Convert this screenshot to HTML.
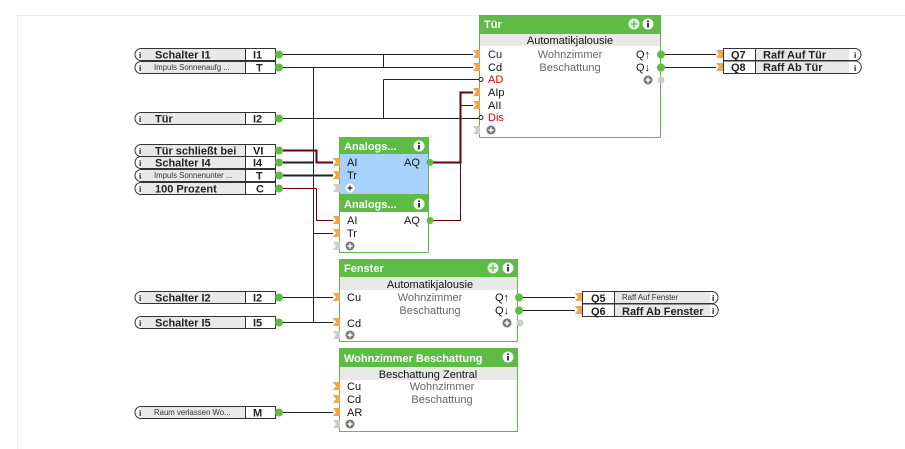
<!DOCTYPE html>
<html><head><meta charset="utf-8"><style>
html,body{margin:0;padding:0;background:#fff;width:905px;height:449px;overflow:hidden}
svg{display:block}
text{font-family:"Liberation Sans",sans-serif}
.b{font-weight:bold;font-size:11px;fill:#222}
.s{font-size:7.8px;fill:#333}
.p{font-size:11px;fill:#111}
.g{font-size:11px;fill:#666}
.r{font-size:11px;fill:#e00}
.t{font-weight:bold;font-size:11px;fill:#fff}
</style></head><body>
<svg width="905" height="449" viewBox="0 0 905 449">
<defs>
<g id="inp"><rect x="0" y="0" width="7" height="8" fill="#f2a54a"/><path d="M0 0 L3 4 L0 8 Z" fill="#fff"/></g>
<g id="ginp"><rect x="0" y="0" width="7" height="8" fill="#ccc"/><path d="M0 0 L3 4 L0 8 Z" fill="#fff"/></g>
<g id="plus"><circle r="4.5" fill="#777"/><path d="M-2.5 0H2.5M0 -2.5V2.5" stroke="#fff" stroke-width="1.5"/></g>
<g id="info"><circle r="5.5" fill="#fff"/><rect x="-0.9" y="-3.5" width="1.8" height="1.6" fill="#222"/><rect x="-0.9" y="-1" width="1.8" height="4.5" fill="#222"/></g>
<g id="move"><circle r="5.5" fill="#fff" opacity=".85"/><path d="M-3.5 0H3.5M0 -3.5V3.5" stroke="#5dbb46" stroke-width="1.3"/></g>
</defs>
<path d="M17.5 15.5H905M17.5 15.5V449" stroke="#ddd" stroke-dasharray="1 1" fill="none"/>

<g stroke="#222" stroke-width="1" fill="none">
<path d="M283 54.5H479"/>
<path d="M283 67.5H479"/>
<path d="M383.5 54.5V67.5"/>
<path d="M313.5 67.5V322.5"/>
<path d="M283 118.5H479"/>
<path d="M383.5 79.5V118.5H383M383.5 79.5H479"/>
<path d="M283 162.5H313" stroke-width="2"/>
<path d="M283 175.5H339" stroke-width="2"/>
<path d="M313.5 233.5H339"/>
<path d="M283 297.5H339"/>
<path d="M283 322.5H339"/>
<path d="M283 412.5H339"/>
<path d="M664 54.5H723M664 67.5H723"/>
<path d="M522 297.5H582M522 310.5H582"/>
<path d="M460 105.5H479"/>
</g>
<g stroke="#6b0000" fill="none">
<path d="M283 150.5H316.5V162.5H339" stroke-width="2"/>
<path d="M283 188.5H316.5" stroke-width="1"/>
<path d="M316.5 188.5V220.5H339" stroke-width="1"/>
<path d="M433 162.5H460.5V92.5H479" stroke-width="2"/>
<path d="M433 220.5H460.5V162" stroke-width="1"/>
</g>

<g>
<g transform="translate(0,48)">
<path d="M141 0.5H275.5V12.5H141A6 6 0 0 1 141 0.5Z" fill="#fff" stroke="#333"/>
<rect x="141" y="1" width="104" height="11" fill="#e8e8e8"/><line x1="245.5" y1="0.5" x2="245.5" y2="12.5" stroke="#333"/>
<text x="139" y="10" font-size="8" font-weight="bold">i</text>
<text class="b" x="155" y="10.5">Schalter I1</text><text class="b" x="253" y="10.5">I1</text>
</g>
<g transform="translate(0,61)">
<path d="M141 0.5H275.5V12.5H141A6 6 0 0 1 141 0.5Z" fill="#fff" stroke="#333"/>
<rect x="141" y="1" width="104" height="11" fill="#e8e8e8"/><line x1="245.5" y1="0.5" x2="245.5" y2="12.5" stroke="#333"/>
<text x="139" y="10" font-size="8" font-weight="bold">i</text>
<text class="s" x="154" y="9">Impuls  Sonnenaufg ...</text><text class="b" x="256" y="10.5">T</text>
</g>
<g transform="translate(0,112)">
<path d="M141 0.5H275.5V12.5H141A6 6 0 0 1 141 0.5Z" fill="#fff" stroke="#333"/>
<rect x="141" y="1" width="104" height="11" fill="#e8e8e8"/><line x1="245.5" y1="0.5" x2="245.5" y2="12.5" stroke="#333"/>
<text x="139" y="10" font-size="8" font-weight="bold">i</text>
<text class="b" x="155" y="10.5">Tür</text><text class="b" x="253" y="10.5">I2</text>
</g>
<g transform="translate(0,144)">
<path d="M141 0.5H275.5V12.5H141A6 6 0 0 1 141 0.5Z" fill="#fff" stroke="#333"/>
<rect x="141" y="1" width="104" height="11" fill="#e8e8e8"/><line x1="245.5" y1="0.5" x2="245.5" y2="12.5" stroke="#333"/>
<text x="139" y="10" font-size="8" font-weight="bold">i</text>
<text class="b" x="155" y="10.5">Tür schließt bei</text><text class="b" x="253" y="10.5">VI</text>
</g>
<g transform="translate(0,156)">
<path d="M141 0.5H275.5V12.5H141A6 6 0 0 1 141 0.5Z" fill="#fff" stroke="#333"/>
<rect x="141" y="1" width="104" height="11" fill="#e8e8e8"/><line x1="245.5" y1="0.5" x2="245.5" y2="12.5" stroke="#333"/>
<text x="139" y="10" font-size="8" font-weight="bold">i</text>
<text class="b" x="155" y="10.5">Schalter I4</text><text class="b" x="253" y="10.5">I4</text>
</g>
<g transform="translate(0,169)">
<path d="M141 0.5H275.5V12.5H141A6 6 0 0 1 141 0.5Z" fill="#fff" stroke="#333"/>
<rect x="141" y="1" width="104" height="11" fill="#e8e8e8"/><line x1="245.5" y1="0.5" x2="245.5" y2="12.5" stroke="#333"/>
<text x="139" y="10" font-size="8" font-weight="bold">i</text>
<text class="s" x="154" y="9">Impuls  Sonnenunter ...</text><text class="b" x="256" y="10.5">T</text>
</g>
<g transform="translate(0,182)">
<path d="M141 0.5H275.5V12.5H141A6 6 0 0 1 141 0.5Z" fill="#fff" stroke="#333"/>
<rect x="141" y="1" width="104" height="11" fill="#e8e8e8"/><line x1="245.5" y1="0.5" x2="245.5" y2="12.5" stroke="#333"/>
<text x="139" y="10" font-size="8" font-weight="bold">i</text>
<text class="b" x="155" y="10.5">100 Prozent</text><text class="b" x="256" y="10.5">C</text>
</g>
<g transform="translate(0,291)">
<path d="M141 0.5H275.5V12.5H141A6 6 0 0 1 141 0.5Z" fill="#fff" stroke="#333"/>
<rect x="141" y="1" width="104" height="11" fill="#e8e8e8"/><line x1="245.5" y1="0.5" x2="245.5" y2="12.5" stroke="#333"/>
<text x="139" y="10" font-size="8" font-weight="bold">i</text>
<text class="b" x="155" y="10.5">Schalter I2</text><text class="b" x="253" y="10.5">I2</text>
</g>
<g transform="translate(0,316)">
<path d="M141 0.5H275.5V12.5H141A6 6 0 0 1 141 0.5Z" fill="#fff" stroke="#333"/>
<rect x="141" y="1" width="104" height="11" fill="#e8e8e8"/><line x1="245.5" y1="0.5" x2="245.5" y2="12.5" stroke="#333"/>
<text x="139" y="10" font-size="8" font-weight="bold">i</text>
<text class="b" x="155" y="10.5">Schalter I5</text><text class="b" x="253" y="10.5">I5</text>
</g>
<g transform="translate(0,406)">
<path d="M141 0.5H275.5V12.5H141A6 6 0 0 1 141 0.5Z" fill="#fff" stroke="#333"/>
<rect x="141" y="1" width="104" height="11" fill="#e8e8e8"/><line x1="245.5" y1="0.5" x2="245.5" y2="12.5" stroke="#333"/>
<text x="139" y="10" font-size="8" font-weight="bold">i</text>
<text class="s" x="154" y="9">Raum  verlassen  Wo...</text><text class="b" x="253" y="10.5">M</text>
</g>
<g fill="#5dbb46">
<circle cx="279" cy="54.5" r="4"/><circle cx="279" cy="67.5" r="4"/><circle cx="279" cy="118.5" r="4"/>
<circle cx="279" cy="150.5" r="4"/><circle cx="279" cy="162.5" r="4"/><circle cx="279" cy="175.5" r="4"/><circle cx="279" cy="188.5" r="4"/>
<circle cx="279" cy="297.5" r="4"/><circle cx="279" cy="322.5" r="4"/><circle cx="279" cy="412.5" r="4"/>
</g>
</g>

<rect x="479.5" y="15.5" width="181" height="122" fill="#fff" stroke="#5dbb46"/>
<rect x="479" y="15" width="182" height="19" fill="#5dbb46"/>
<rect x="480" y="34" width="180" height="12" fill="#e8e8e8"/>
<text class="t" x="484" y="28">Tür</text>
<use href="#move" x="634" y="24"/><use href="#info" x="648" y="24"/>
<text class="p" x="570" y="44" text-anchor="middle">Automatikjalousie</text>
<text class="g" x="570" y="58" text-anchor="middle">Wohnzimmer</text>
<text class="g" x="570" y="71" text-anchor="middle">Beschattung</text>
<text class="p" x="488" y="58">Cu</text><text class="p" x="488" y="71">Cd</text>
<text class="r" x="488" y="83">AD</text><text class="p" x="488" y="96">AIp</text>
<text class="p" x="488" y="109">AII</text><text class="r" x="488" y="121">Dis</text>
<text class="p" x="636" y="58">Q↑</text><text class="p" x="636" y="71">Q↓</text>
<use href="#inp" x="473" y="50"/><use href="#inp" x="473" y="63"/>
<use href="#inp" x="473" y="88"/><use href="#inp" x="473" y="101"/>
<circle cx="481" cy="79.5" r="2" fill="#fff" stroke="#222"/><circle cx="481" cy="117.5" r="2" fill="#fff" stroke="#222"/>
<use href="#ginp" x="473" y="126"/><use href="#plus" x="491" y="130"/>
<use href="#plus" x="648" y="80"/><circle cx="661" cy="80" r="3.5" fill="#ccc"/>
<circle cx="661" cy="54.5" r="4" fill="#5dbb46"/><circle cx="661" cy="67.5" r="4" fill="#5dbb46"/>

<g>
<path d="M723.5 48.5H855A6 6 0 0 1 855 60.5H723.5Z" fill="#fff" stroke="#333"/>
<path d="M723.5 61H855A6 6 0 0 1 855 73.5H723.5Z" fill="#fff" stroke="#333"/>
<rect x="756" y="49" width="93" height="11" fill="#e8e8e8"/><rect x="756" y="61.5" width="93" height="11.5" fill="#e8e8e8"/>
<line x1="755.5" y1="48" x2="755.5" y2="74" stroke="#333"/>
<text class="b" x="731" y="58.5">Q7</text><text class="b" x="731" y="71">Q8</text>
<text class="b" x="763" y="58.5">Raff Auf Tür</text><text class="b" x="763" y="71">Raff Ab Tür</text>
<text x="854" y="58" font-size="8" font-weight="bold">i</text><text x="854" y="71" font-size="8" font-weight="bold">i</text>
<use href="#inp" x="716" y="50"/><use href="#inp" x="716" y="63"/>
</g>
<g>
<path d="M582.5 291.5H712A6 6 0 0 1 712 303.5H582.5Z" fill="#fff" stroke="#333"/>
<path d="M582.5 304H712A6 6 0 0 1 712 316.5H582.5Z" fill="#fff" stroke="#333"/>
<rect x="615" y="292" width="95" height="11" fill="#e8e8e8"/><rect x="615" y="304.5" width="95" height="11.5" fill="#e8e8e8"/>
<line x1="614.5" y1="291" x2="614.5" y2="317" stroke="#333"/>
<text class="b" x="591" y="302">Q5</text><text class="b" x="591" y="315">Q6</text>
<text class="s" x="622" y="300">Raff Auf Fenster</text><text class="b" x="622" y="315">Raff Ab Fenster</text>
<text x="712" y="301" font-size="8" font-weight="bold">i</text><text x="712" y="314" font-size="8" font-weight="bold">i</text>
<use href="#inp" x="575" y="293"/><use href="#inp" x="575" y="306"/>
</g>

<rect x="339.5" y="137.5" width="89" height="57" fill="#a8d2fb" stroke="#5dbb46"/>
<rect x="339" y="137" width="90" height="17" fill="#5dbb46"/>
<text class="t" x="344" y="150">Analogs...</text><use href="#info" x="419" y="146"/>
<text class="p" x="347" y="166">AI</text><text class="p" x="347" y="179">Tr</text><text class="p" x="404" y="166">AQ</text>
<use href="#inp" x="333" y="158"/><use href="#inp" x="333" y="171"/><use href="#ginp" x="333" y="184"/>
<circle cx="350" cy="188" r="4.5" fill="#fff"/><path d="M347.5 188H352.5M350 185.5V190.5" stroke="#222" stroke-width="1.2"/>
<circle cx="430" cy="162.5" r="3.5" fill="#5dbb46"/>
<rect x="339.5" y="195.5" width="89" height="57" fill="#fff" stroke="#5dbb46"/>
<rect x="339" y="195" width="90" height="17" fill="#5dbb46"/>
<text class="t" x="344" y="208">Analogs...</text><use href="#info" x="419" y="204"/>
<text class="p" x="347" y="224">AI</text><text class="p" x="347" y="237">Tr</text><text class="p" x="404" y="224">AQ</text>
<use href="#inp" x="333" y="216"/><use href="#inp" x="333" y="229"/><use href="#ginp" x="333" y="242"/>
<use href="#plus" x="350" y="246"/>
<circle cx="430" cy="220.5" r="3.5" fill="#5dbb46"/>

<rect x="339.5" y="259.5" width="178" height="82" fill="#fff" stroke="#5dbb46"/>
<rect x="339" y="259" width="179" height="18" fill="#5dbb46"/>
<rect x="340" y="277" width="177" height="13" fill="#e8e8e8"/>
<text class="t" x="344" y="272">Fenster</text>
<use href="#move" x="493" y="268"/><use href="#info" x="508" y="268"/>
<text class="p" x="430" y="288" text-anchor="middle">Automatikjalousie</text>
<text class="g" x="430" y="301" text-anchor="middle">Wohnzimmer</text>
<text class="g" x="430" y="314" text-anchor="middle">Beschattung</text>
<text class="p" x="347" y="301">Cu</text><text class="p" x="347" y="327">Cd</text>
<text class="p" x="495" y="301">Q↑</text><text class="p" x="495" y="314">Q↓</text>
<use href="#inp" x="333" y="293"/><use href="#inp" x="333" y="318"/><use href="#ginp" x="333" y="331"/>
<use href="#plus" x="350" y="335"/><use href="#plus" x="507" y="323"/><circle cx="520" cy="323" r="3.5" fill="#ccc"/>
<circle cx="519" cy="297.5" r="4" fill="#5dbb46"/><circle cx="519" cy="310.5" r="4" fill="#5dbb46"/>

<rect x="339.5" y="348.5" width="178" height="83" fill="#fff" stroke="#5dbb46"/>
<rect x="339" y="348" width="179" height="19" fill="#5dbb46"/>
<rect x="340" y="367" width="177" height="13" fill="#e8e8e8"/>
<text class="t" x="344" y="362">Wohnzimmer Beschattung</text>
<use href="#info" x="508" y="357"/>
<text class="p" x="428" y="378" text-anchor="middle">Beschattung Zentral</text>
<text class="g" x="442" y="390" text-anchor="middle">Wohnzimmer</text>
<text class="g" x="442" y="403" text-anchor="middle">Beschattung</text>
<text class="p" x="347" y="390">Cu</text><text class="p" x="347" y="403">Cd</text><text class="p" x="347" y="416">AR</text>
<use href="#inp" x="333" y="382"/><use href="#inp" x="333" y="395"/><use href="#inp" x="333" y="408"/><use href="#ginp" x="333" y="420"/>
<use href="#plus" x="350" y="424"/>
</svg>
</body></html>
